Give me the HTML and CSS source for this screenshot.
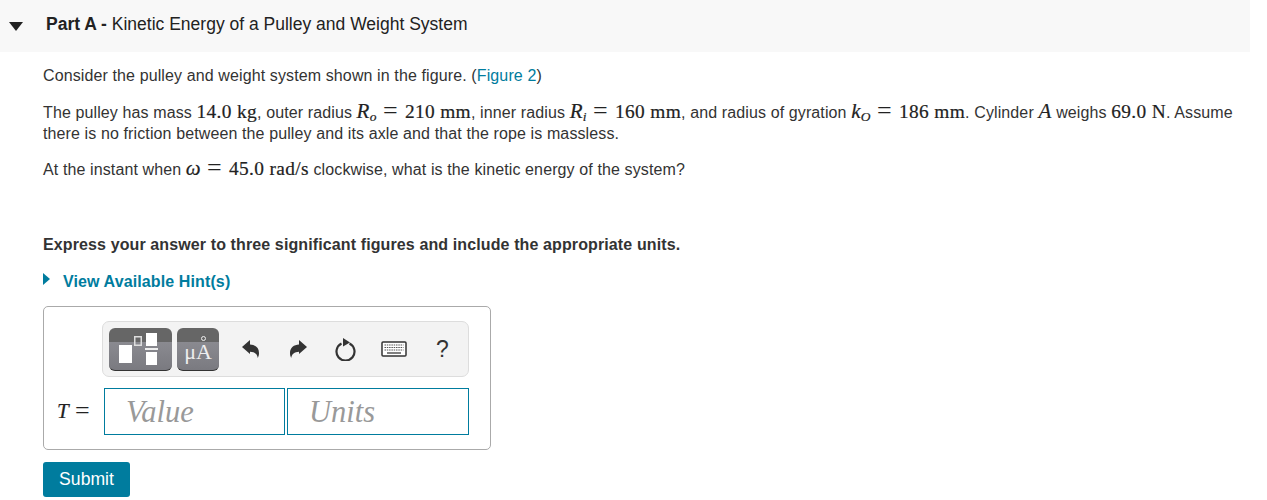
FILE: index.html
```html
<!DOCTYPE html>
<html>
<head>
    <title>Part A</title>
    <link rel="stylesheet" href="styles.css">
</head>
<body>
    <div class="part-header">
        <span class="caret-down"></span>
        <h2 class="part-title"><b>Part A -</b> Kinetic Energy of a Pulley and Weight System</h2>
    </div>

    <div class="part-body">
        <p class="intro">Consider the pulley and weight system shown in the figure. (<a href="#">Figure 2</a>)</p>
        <p class="given">The pulley has mass <span class="m">14.0 kg</span>, outer radius <span class="m"><i>R<sub>o</sub></i><span class="eq">=</span>210 mm</span>, inner radius <span class="m"><i>R<sub>i</sub></i><span class="eq">=</span>160 mm</span>, and radius of gyration <span class="m"><i>k<sub>O</sub></i><span class="eq">=</span>186 mm</span>. Cylinder <span class="m"><i>A</i></span> weighs <span class="m">69.0 N</span>. Assume<br>there is no friction between the pulley and its axle and that the rope is massless.</p>
        <p class="ask">At the instant when <span class="m"><i>ω</i><span class="eq">=</span>45.0 rad/s</span> clockwise, what is the kinetic energy of the system?</p>
        <p class="express">Express your answer to three significant figures and include the appropriate units.</p>
        <div class="hints"><span class="caret-right"></span><a href="#">View Available Hint(s)</a></div>

        <div class="answer-box">
            <div class="toolbar">
                <button class="tpl tpl-wide" title="Templates">
                    <svg width="63" height="43" viewBox="0 0 63 43">
                        <rect x="10" y="17" width="13" height="18" fill="#fff"/>
                        <rect x="25.750" y="8.750" width="6.500" height="8.500" fill="none" stroke="#ddd" stroke-width="1.500"/>
                        <rect x="37" y="5" width="11" height="13" fill="#fff"/>
                        <rect x="36" y="20" width="13" height="2" fill="#eee"/>
                        <rect x="37" y="24" width="11" height="13" fill="#fff"/>
                    </svg>
                </button>
                <button class="tpl tpl-unit" title="Units">μ<span class="ring-a">A</span></button>
                <svg class="tool undo" width="20" height="22" viewBox="0 0 20 22"><path d="M1 9 9 2v4.500c5 .2 9 3 9 8.500 0 2-.5 3.500-1.200 5-.5-4-3.300-6.200-7.800-6.300V16z" fill="#333"/></svg>
                <svg class="tool redo" width="20" height="22" viewBox="0 0 20 22"><path d="M19 9 11 2v4.500c-5 .2-9 3-9 8.500 0 2 .5 3.500 1.200 5 .5-4 3.300-6.200 7.800-6.300V16z" fill="#333"/></svg>
                <svg class="tool reload" width="22" height="24" viewBox="0 0 22 24"><path d="M6.500 6.500a9 9 0 1 0 8 0" fill="none" stroke="#333" stroke-width="2.200"/><path d="M8 1 15 5.500 8 9.500z" fill="#333"/></svg>
                <svg class="tool keys" width="26" height="16" viewBox="0 0 26 16"><rect x="1" y="1" width="24" height="14" rx="1" fill="#fff" stroke="#333" stroke-width="1.500"/><path d="M3.500 4h19M3.500 6.500h19M3.500 9h19" stroke="#555" stroke-width="1.200" stroke-dasharray="1.500 .8"/><path d="M6 12h14" stroke="#555" stroke-width="1.500"/></svg>
                <span class="tool help">?</span>
            </div>
            <div class="answer-row">
                <span class="m var"><i>T</i><span class="eq">=</span></span>
                <input class="field" type="text" placeholder="Value">
                <input class="field" type="text" placeholder="Units">
            </div>
        </div>

        <button class="submit">Submit</button>
    </div>
</body>
</html>
```

FILE: styles.css
```css
body { margin: 0; font-family: "Liberation Sans", Arial, sans-serif; font-size: 16px; color: #333; background: #fff; overflow: hidden; }
a { color: #007c9e; text-decoration: none; }
p { margin: 0; }

.part-header { display: flex; align-items: center; width: 1250px; height: 52px; background: #f8f8f8; box-sizing: border-box; padding: 0 0 4px 9px; }
.part-title { margin: 0 0 0 23px; font-size: 17.5px; font-weight: normal; color: #222; }
.part-title b { font-weight: bold; }
.caret-down { width: 0; height: 0; margin-top: 4px; border-left: 7px solid transparent; border-right: 7px solid transparent; border-top: 9px solid #222; }

.part-body { padding: 13px 0 0 43px; width: 1200px; line-height: 21px; letter-spacing: .115px; }
.given { margin-top: 16px; }
.ask { margin-top: 15px; }
.express { margin-top: 54px; font-weight: bold; }

.m { font-family: "Liberation Serif", "DejaVu Serif", serif; font-size: 19.36px; line-height: 0; letter-spacing: .35px; color: #222; -webkit-text-stroke: .2px #222; }
.m i { font-size: 21px; }
.m sub { font-size: 13.5px; line-height: 0; vertical-align: -3px; }
.eq { margin: 0 7px 0 6px; font-size: 26px; line-height: 0; vertical-align: -1px; -webkit-text-stroke: 0; }

.hints { display: flex; align-items: center; margin-top: 16px; font-weight: bold; }
.caret-right { width: 0; height: 0; margin-right: 13px; margin-bottom: 5px; border-top: 6px solid transparent; border-bottom: 6px solid transparent; border-left: 7px solid #007c9e; }

.answer-box { box-sizing: border-box; width: 448px; height: 144px; margin-top: 14px; padding: 14px 21px 0 13px; border: 1px solid #aaa; border-radius: 5px; }
.toolbar { display: flex; align-items: center; box-sizing: border-box; width: 367px; height: 56px; margin-left: 45px; padding-left: 6px; background: #f3f3f3; border: 1px solid #ddd; border-radius: 7px; }
.tpl { box-sizing: border-box; height: 43px; padding: 0; border: none; border-bottom: 1px solid #333; border-radius: 6px; background: linear-gradient(#666 0, #666 34%, #8a8a90 34%, #7a7a80 100%); color: #eee; }
.tpl-wide { width: 63px; overflow: hidden; }
.tpl-wide svg { display: block; }
.tpl-unit { width: 42px; margin-left: 5px; padding-top: 7px; font-family: "Liberation Serif", serif; font-size: 22px; }
.ring-a { position: relative; }
.ring-a::after { content: ""; position: absolute; left: 5px; top: -3px; width: 3px; height: 3px; border: 1px solid #eee; border-radius: 50%; }

.tool { display: block; flex: none; }
.undo { margin-left: 22px; }
.redo { margin-left: 27px; }
.reload { margin-left: 27px; }
.keys { margin-left: 24px; }
.help { margin-left: 29px; font-size: 23px; letter-spacing: 0; color: #333; }

.answer-row { display: flex; align-items: center; margin-top: 11px; }
.var { width: 47px; }
.field { box-sizing: border-box; width: 181px; height: 47px; margin-right: 2px; padding: 1px 21px 0; border: 1px solid #007c9e; border-radius: 0; outline: none; font-family: "Liberation Serif", serif; font-style: italic; font-size: 30.5px; }
.field + .field { width: 182px; margin-right: 0; }
.field::placeholder { color: #999; opacity: 1; }

.submit { display: block; width: 87px; height: 35px; margin-top: 12px; padding: 0; border: none; border-radius: 3px; background: #007c9e; color: #fff; font-family: "Liberation Sans", Arial, sans-serif; font-size: 17.6px; }
```
